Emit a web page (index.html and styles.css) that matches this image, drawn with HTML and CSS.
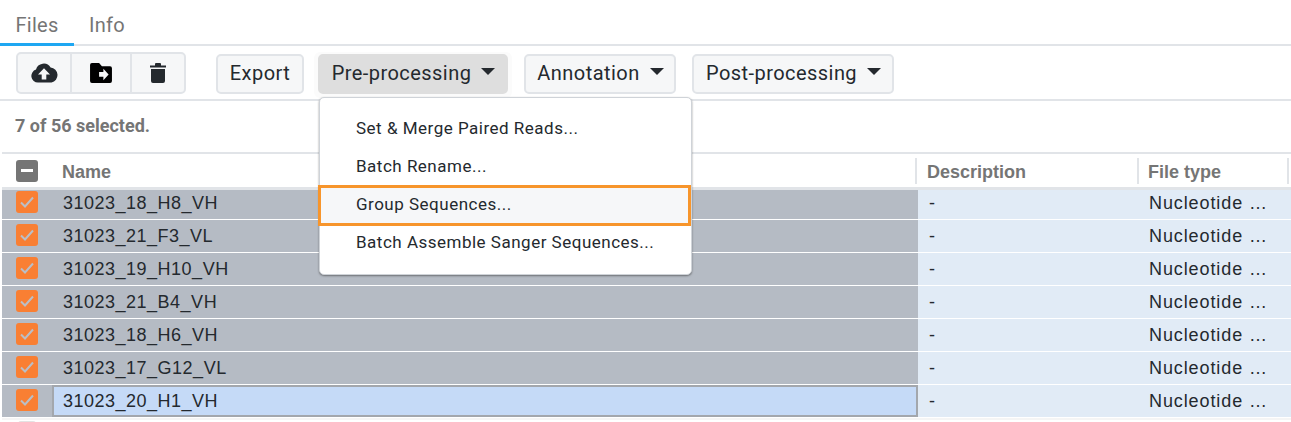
FILE: index.html
```html
<!DOCTYPE html>
<html>
<head>
	<title>Files</title>
	<meta charset="utf-8">
	<link rel="stylesheet" href="styles.css">
</head>
<body>
<div class="tabs">
	<div class="tab active">Files</div>
	<div class="tab">Info</div>
</div>

<div class="toolbar">
	<div class="btn-group">
		<div class="btn icon-btn first">
			<svg width="28" height="20" viewBox="0 0 28 20"><path fill="#24292e" d="M8 19.5a6.6 6.6 0 0 1-2-12.9A8 8 0 0 1 20.600 4.500 7.600 7.600 0 0 1 21.500 19.500z"/><path fill="#f6f7f8" d="M14 5.200l6 6.300h-3.700v5h-4.600v-5H8z"/></svg>
		</div>
		<div class="btn icon-btn second">
			<svg width="22" height="20" viewBox="0 0 23 21"><path fill="#000" d="M2 0h7.500l3 3.500H21a2 2 0 0 1 2 2V19a2 2 0 0 1-2 2H2a2 2 0 0 1-2-2V2a2 2 0 0 1 2-2z"/><path fill="#f6f7f8" d="M9.500 9.500h4.500V6l5.500 6-5.500 6v-3.500H9.500z"/></svg>
		</div>
		<div class="btn icon-btn third">
			<svg width="16" height="20" viewBox="0 0 16 20"><path fill="#24292e" d="M0 2.500h5V1a1 1 0 0 1 1-1h4a1 1 0 0 1 1 1v1.500h5v2H0zM1 6h14v12a2 2 0 0 1-2 2H3a2 2 0 0 1-2-2z"/></svg>
		</div>
	</div>
	<div class="btn export">Export</div>
	<div class="btn-halo">
		<div class="btn drop pressed">Pre-processing<span class="caret"></span></div>
	</div>
	<div class="btn drop annotation">Annotation<span class="caret"></span></div>
	<div class="btn drop postproc">Post-processing<span class="caret"></span></div>
</div>

<div class="selected-bar">7 of 56 selected.</div>

<div class="table">
	<div class="row head">
		<div class="check-cell"><span class="check minus"></span></div>
		<div class="cell name">Name</div>
		<div class="cell desc">Description</div>
		<div class="cell type">File type</div>
		<div class="cell rest"></div>
	</div>
	<div class="rows">
		<div class="row">
			<div class="check-cell"><span class="check"><svg width="14" height="12" viewBox="0 0 14 12"><path d="M1 6.500l4 4L13 1.500" fill="none" stroke="#b9bfc7" stroke-width="2"/></svg></span></div>
			<div class="cell name">31023_18_H8_VH</div>
			<div class="cell desc">-</div>
			<div class="cell type">Nucleotide …</div>
		</div>
		<div class="row">
			<div class="check-cell"><span class="check"><svg width="14" height="12" viewBox="0 0 14 12"><path d="M1 6.500l4 4L13 1.500" fill="none" stroke="#b9bfc7" stroke-width="2"/></svg></span></div>
			<div class="cell name">31023_21_F3_VL</div>
			<div class="cell desc">-</div>
			<div class="cell type">Nucleotide …</div>
		</div>
		<div class="row">
			<div class="check-cell"><span class="check"><svg width="14" height="12" viewBox="0 0 14 12"><path d="M1 6.500l4 4L13 1.500" fill="none" stroke="#b9bfc7" stroke-width="2"/></svg></span></div>
			<div class="cell name">31023_19_H10_VH</div>
			<div class="cell desc">-</div>
			<div class="cell type">Nucleotide …</div>
		</div>
		<div class="row">
			<div class="check-cell"><span class="check"><svg width="14" height="12" viewBox="0 0 14 12"><path d="M1 6.500l4 4L13 1.500" fill="none" stroke="#b9bfc7" stroke-width="2"/></svg></span></div>
			<div class="cell name">31023_21_B4_VH</div>
			<div class="cell desc">-</div>
			<div class="cell type">Nucleotide …</div>
		</div>
		<div class="row">
			<div class="check-cell"><span class="check"><svg width="14" height="12" viewBox="0 0 14 12"><path d="M1 6.500l4 4L13 1.500" fill="none" stroke="#b9bfc7" stroke-width="2"/></svg></span></div>
			<div class="cell name">31023_18_H6_VH</div>
			<div class="cell desc">-</div>
			<div class="cell type">Nucleotide …</div>
		</div>
		<div class="row">
			<div class="check-cell"><span class="check"><svg width="14" height="12" viewBox="0 0 14 12"><path d="M1 6.500l4 4L13 1.500" fill="none" stroke="#b9bfc7" stroke-width="2"/></svg></span></div>
			<div class="cell name">31023_17_G12_VL</div>
			<div class="cell desc">-</div>
			<div class="cell type">Nucleotide …</div>
		</div>
		<div class="row editing">
			<div class="check-cell"><span class="check"><svg width="14" height="12" viewBox="0 0 14 12"><path d="M1 6.500l4 4L13 1.500" fill="none" stroke="#b9bfc7" stroke-width="2"/></svg></span></div>
			<div class="cell name">31023_20_H1_VH</div>
			<div class="cell desc">-</div>
			<div class="cell type">Nucleotide …</div>
		</div>
		<div class="next-row"><span class="check blank"></span></div>
	</div>
</div>

<ul class="menu">
	<li>Set &amp; Merge Paired Reads...</li>
	<li>Batch Rename...</li>
	<li class="focus">Group Sequences...</li>
	<li>Batch Assemble Sanger Sequences...</li>
</ul>
</body>
</html>
```

FILE: styles.css
```css
*{
	margin: 0;
	padding: 0;
	box-sizing: border-box;
}
html,body{
	height: 422px;
	overflow: hidden;
}
body{
	background-color: #fff;
	font-family: Roboto, "Liberation Sans", sans-serif;
	color: #24292e;
	position: relative;
}
.tabs{
	display: flex;
	height: 46px;
	border-bottom: 2px solid #e1e4e8;
}
.tab{
	width: 74px;
	height: 46px;
	padding-top: 13px;
	text-align: center;
	font-size: 20px;
	line-height: 24px;
	color: #757575;
	letter-spacing: 0.3px;
}
.tab + .tab{
	width: 66px;
}
.tab.active{
	border-bottom: 3px solid #1ea7f2;
}
.toolbar{
	display: flex;
	align-items: flex-start;
	height: 55px;
	padding: 6px 0 0 16px;
	border-bottom: 2px solid #e1e4e8;
}
.btn{
	display: flex;
	align-items: center;
	justify-content: center;
	height: 40px;
	margin-top: 2px;
	padding-bottom: 2px;
	background-color: #f6f7f8;
	border: 2px solid #e1e4e8;
	border-radius: 5px;
	font-size: 20px;
	letter-spacing: 0.5px;
}
.drop{
	padding-left: 1px;
	letter-spacing: 0.45px;
}
.btn-group{
	display: flex;
	width: 170px;
	height: 42px;
	background-color: #f6f7f8;
	border: 2px solid #e1e4e8;
	border-radius: 5px;
}
.icon-btn{
	height: 38px;
	margin: 0;
	padding-bottom: 1px;
	border: 0;
	border-radius: 0;
	background: none;
}
.first{
	width: 52px;
}
.second{
	width: 60px;
	border-left: 2px solid #e1e4e8;
}
.third{
	width: 54px;
	border-left: 2px solid #e1e4e8;
}
.export{
	width: 88px;
	margin-left: 30px;
}
.btn-halo{
	width: 198px;
	height: 46px;
	margin-left: 10px;
	padding: 0 4px;
	background-color: #fbfbfb;
	border-radius: 6px;
}
.pressed{
	width: 190px;
	background-color: #dedede;
	border-color: #dedede;
}
.annotation{
	width: 152px;
	margin-left: 12px;
}
.postproc{
	width: 202px;
	margin-left: 16px;
}
.caret{
	width: 0;
	height: 0;
	margin-left: 10px;
	margin-bottom: 3px;
	border-left: 7px solid transparent;
	border-right: 7px solid transparent;
	border-top: 7px solid #24292e;
}
.selected-bar{
	height: 51px;
	padding: 15px 0 0 15px;
	font-size: 18px;
	line-height: 20px;
	font-weight: 700;
	color: #757575;
}
.table{
	margin-left: 2px;
	border-top: 2px solid #e1e4e8;
	background-color: #f5f5f5;
	height: 268px;
}
.row{
	display: grid;
	grid-template-columns: 50px 866px 219px 1fr;
	height: 33px;
	border-bottom: 1px solid #fff;
	font-family: "Liberation Sans", Arial, sans-serif;
	font-size: 18px;
	letter-spacing: 0.5px;
	color: #24292e;
}
.row.head{
	grid-template-columns: 50px 863px 222px 150px 1fr;
	position: relative;
	z-index: 1;
	height: 36px;
	align-items: center;
	background-color: #fff;
	border-bottom: 3px solid #e1e4e8;
	font-weight: 700;
	letter-spacing: 0;
	color: #757575;
}
.rows{
	margin-top: -3px;
}
.check-cell{
	display: flex;
	align-items: flex-start;
	padding: 4px 0 0 14px;
	background-color: #b5bbc4;
}
.head .check-cell{
	padding-top: 0;
	background: none;
}
.check{
	display: flex;
	align-items: center;
	justify-content: center;
	width: 22px;
	height: 22px;
	background-color: #f97f33;
	border-radius: 3px;
}
.check.minus{
	background-color: #757575;
}
.check.minus::before{
	content: "";
	width: 12px;
	height: 3px;
	background-color: #fff;
}
.next-row{
	padding: 3px 0 0 16px;
}
.check.blank{
	width: 18px;
	background-color: #e3e3e3;
}
.cell{
	height: 32px;
	line-height: 32px;
	white-space: nowrap;
}
.head .cell{
	height: 26px;
	line-height: 28px;
	color: #757575;
}
.name{
	padding-left: 11px;
	background-color: #b5bbc4;
}
.head .name{
	padding-left: 10px;
	background: none;
}
.desc{
	padding-left: 11px;
	background-color: #e1ebf6;
}
.head .desc,
.head .rest{
	padding-left: 10px;
	background: none;
	border-left: 2px solid #e1e4e8;
}
.type{
	padding-left: 12px;
	letter-spacing: 0.9px;
	background-color: #e1ebf6;
}
.head .type{
	padding-left: 9px;
	letter-spacing: 0;
	background: none;
	border-left: 2px solid #e1e4e8;
}
.editing .name{
	background-color: #c5daf7;
	border: 2px solid #a3a7ad;
	padding-left: 9px;
	line-height: 28px;
}
.menu{
	position: absolute;
	z-index: 2;
	top: 97px;
	left: 319px;
	width: 373px;
	height: 178px;
	padding-top: 12px;
	list-style: none;
	background-color: #fff;
	border: 1px solid #cfd3d8;
	border-radius: 5px;
	box-shadow: 0 1px 2px rgba(60,60,60,0.6);
}
.menu li{
	height: 38px;
	padding-left: 36px;
	font-size: 17px;
	line-height: 36px;
	letter-spacing: 0.5px;
	color: #24292e;
}
.menu li.focus{
	margin: -1px 0 -2px -2px;
	padding-left: 35px;
	width: 373px;
	height: 41px;
	background-color: #f6f7f9;
	border: 3px solid #f7952c;
	line-height: 33px;
}
```
